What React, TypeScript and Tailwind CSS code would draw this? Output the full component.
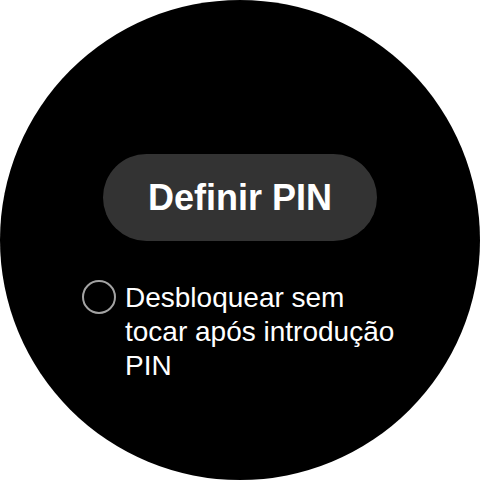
export default function App() {
  return (
    <div className="w-[480px] h-[480px] bg-white" style={{ fontFamily: '"Liberation Sans", Arial, sans-serif' }}>
      <div className="w-full h-full rounded-full bg-black flex flex-col items-center pt-[154px]">
        {/* Set PIN button */}
        <button className="w-[274px] h-[87px] rounded-full bg-[#333333] text-white font-bold text-[36px] leading-none flex items-center justify-center">
          Definir PIN
        </button>

        {/* Option row */}
        <div className="self-start ml-[82px] mt-[39px] flex items-start gap-[9px]">
          <div className="w-[34px] h-[34px] shrink-0 rounded-full border-2 border-[#a3a3a3]" />
          <p className="w-[278px] text-white text-[28px] leading-[34px] mt-[1px]">
            Desbloquear sem tocar após introdução PIN
          </p>
        </div>
      </div>
    </div>
  );
}
